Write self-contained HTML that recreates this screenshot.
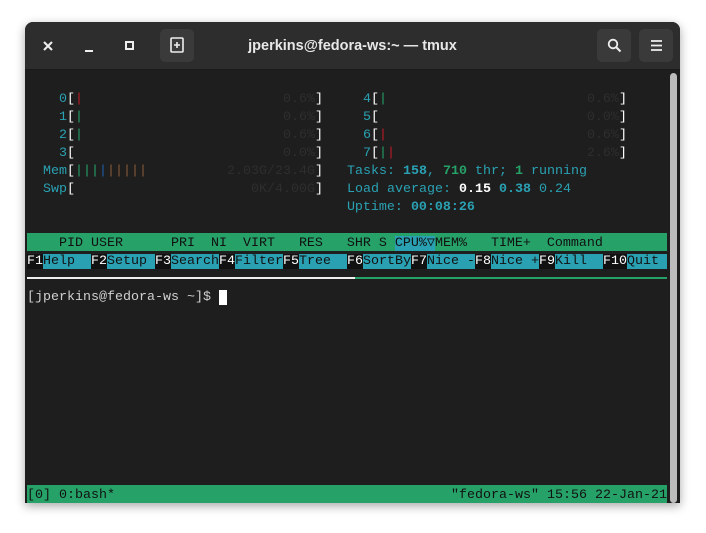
<!DOCTYPE html><html><head><style>
body{margin:0;width:706px;height:533px;background:#fff;position:relative;overflow:hidden;font-family:"Liberation Sans",sans-serif}
.win{position:absolute;left:25px;top:22px;width:655px;height:481px;background:#1e1e1e;border-radius:8px 8px 0 0;box-shadow:0 3px 10px rgba(0,0,0,.35);overflow:hidden}
.tb{position:absolute;left:0;top:0;width:655px;height:47px;background:#2d2d2d;border-bottom:1px solid #1a1a1a}
.btn{position:absolute;top:7px;width:34px;height:33px;background:#3a3a3a;border-radius:5px}
.title{position:absolute;left:0;width:655px;top:16px;text-align:center;color:#e8e8e8;font-size:14.5px;font-weight:bold}
.t{position:absolute;left:2px;font-family:"Liberation Mono","DejaVu Sans Mono",monospace;font-size:13.33px;line-height:18px;white-space:pre;color:#d0d0d0}
.c{color:#2aa1b3}.w{color:#fff}.g{color:#26a269}.r{color:#c01c28}.b{color:#1e5fa8}.o{color:#8a5b3a}.d{color:#2e2e2e}.bc{color:#2aa1b3;font-weight:bold}.bg{color:#26a269;font-weight:bold}.bw{color:#fff;font-weight:bold}
.hk{color:#fff;background:#111}.hl{color:#111;background:#2aa1b3}
</style></head><body>
<div class="win">
<div class="tb">
<svg style="position:absolute;left:18px;top:19px" width="10" height="10"><path d="M1 1L9 9M9 1L1 9" stroke="#eee" stroke-width="2"/></svg>
<div style="position:absolute;left:60px;top:28px;width:8px;height:2px;background:#eee"></div>
<div style="position:absolute;left:100px;top:19px;width:5px;height:5px;border:2px solid #eee"></div>
<div class="btn" style="left:135px"><svg style="position:absolute;left:9px;top:8px" width="16" height="16"><rect x="2" y="1" width="12" height="14" rx="1" fill="none" stroke="#eee" stroke-width="1.6"/><path d="M8 5V11M5 8H11" stroke="#eee" stroke-width="1.6"/></svg></div>
<div class="title">jperkins@fedora-ws:~ — tmux</div>
<div class="btn" style="left:572px"><svg style="position:absolute;left:10px;top:9px" width="15" height="15"><circle cx="6" cy="6" r="4.3" fill="none" stroke="#eee" stroke-width="1.8"/><path d="M9 9L13.5 13.5" stroke="#eee" stroke-width="2"/></svg></div>
<div class="btn" style="left:614px"><svg style="position:absolute;left:12px;top:10px" width="11" height="13"><path d="M0 2H11M0 6.5H11M0 11H11" stroke="#eee" stroke-width="1.8"/></svg></div>
</div>
<div style="position:absolute;left:645px;top:51px;width:7px;height:430px;background:#bcbcbc;border-radius:4px"></div>
<div style="position:absolute;left:2px;top:211px;width:640px;height:18px;background:#26a269"></div>
<div style="position:absolute;left:2px;top:463px;width:640px;height:18px;background:#26a269"></div>
<div style="position:absolute;left:2px;top:255px;width:328px;height:2px;background:#eee"></div>
<div style="position:absolute;left:330px;top:255px;width:312px;height:2px;background:#26a269"></div>
<div class="t" style="top:69px">    <span class="c">0</span><span class="w">[</span><span class="r">|</span>                         <span class="d">0.6%</span><span class="w">]</span>     <span class="c">4</span><span class="w">[</span><span class="g">|</span>                         <span class="d">0.6%</span><span class="w">]</span>
    <span class="c">1</span><span class="w">[</span><span class="g">|</span>                         <span class="d">0.6%</span><span class="w">]</span>     <span class="c">5</span><span class="w">[</span>                          <span class="d">0.0%</span><span class="w">]</span>
    <span class="c">2</span><span class="w">[</span><span class="g">|</span>                         <span class="d">0.6%</span><span class="w">]</span>     <span class="c">6</span><span class="w">[</span><span class="r">|</span>                         <span class="d">0.6%</span><span class="w">]</span>
    <span class="c">3</span><span class="w">[</span>                          <span class="d">0.0%</span><span class="w">]</span>     <span class="c">7</span><span class="w">[</span><span class="g">|</span><span class="r">|</span>                        <span class="d">2.6%</span><span class="w">]</span>
  <span class="c">Mem</span><span class="w">[</span><span class="g">|||</span><span class="b">|</span><span class="o">|||||</span>          <span class="d">2.03G/23.4G</span><span class="w">]</span>   <span class="c">Tasks: </span><span class="bc">158</span><span class="c">, </span><span class="bg">710</span><span class="c"> thr; </span><span class="bg">1</span><span class="c"> running</span>
  <span class="c">Swp</span><span class="w">[</span>                      <span class="d">0K/4.00G</span><span class="w">]</span>   <span class="c">Load average: </span><span class="bw">0.15 </span><span class="bc">0.38 </span><span class="c">0.24</span>
                                        <span class="c">Uptime: </span><span class="bc">00:08:26</span>

<span style="color:#111">    PID USER      PRI  NI  VIRT   RES   SHR S <span style="background:#2aa1b3">CPU%▽</span>MEM%   TIME+  Command</span>
<span class="hk">F1</span><span class="hl">Help  </span><span class="hk">F2</span><span class="hl">Setup </span><span class="hk">F3</span><span class="hl">Search</span><span class="hk">F4</span><span class="hl">Filter</span><span class="hk">F5</span><span class="hl">Tree  </span><span class="hk">F6</span><span class="hl">SortBy</span><span class="hk">F7</span><span class="hl">Nice -</span><span class="hk">F8</span><span class="hl">Nice +</span><span class="hk">F9</span><span class="hl">Kill  </span><span class="hk">F10</span><span class="hl">Quit </span>

[jperkins@fedora-ws ~]$ <span style="background:#fff"> </span></div>
<div class="t" style="top:465px;color:#111;width:640px">[0] 0:bash*<span style="position:absolute;right:0">"fedora-ws" 15:56 22-Jan-21</span></div>
</div>
</body></html>
